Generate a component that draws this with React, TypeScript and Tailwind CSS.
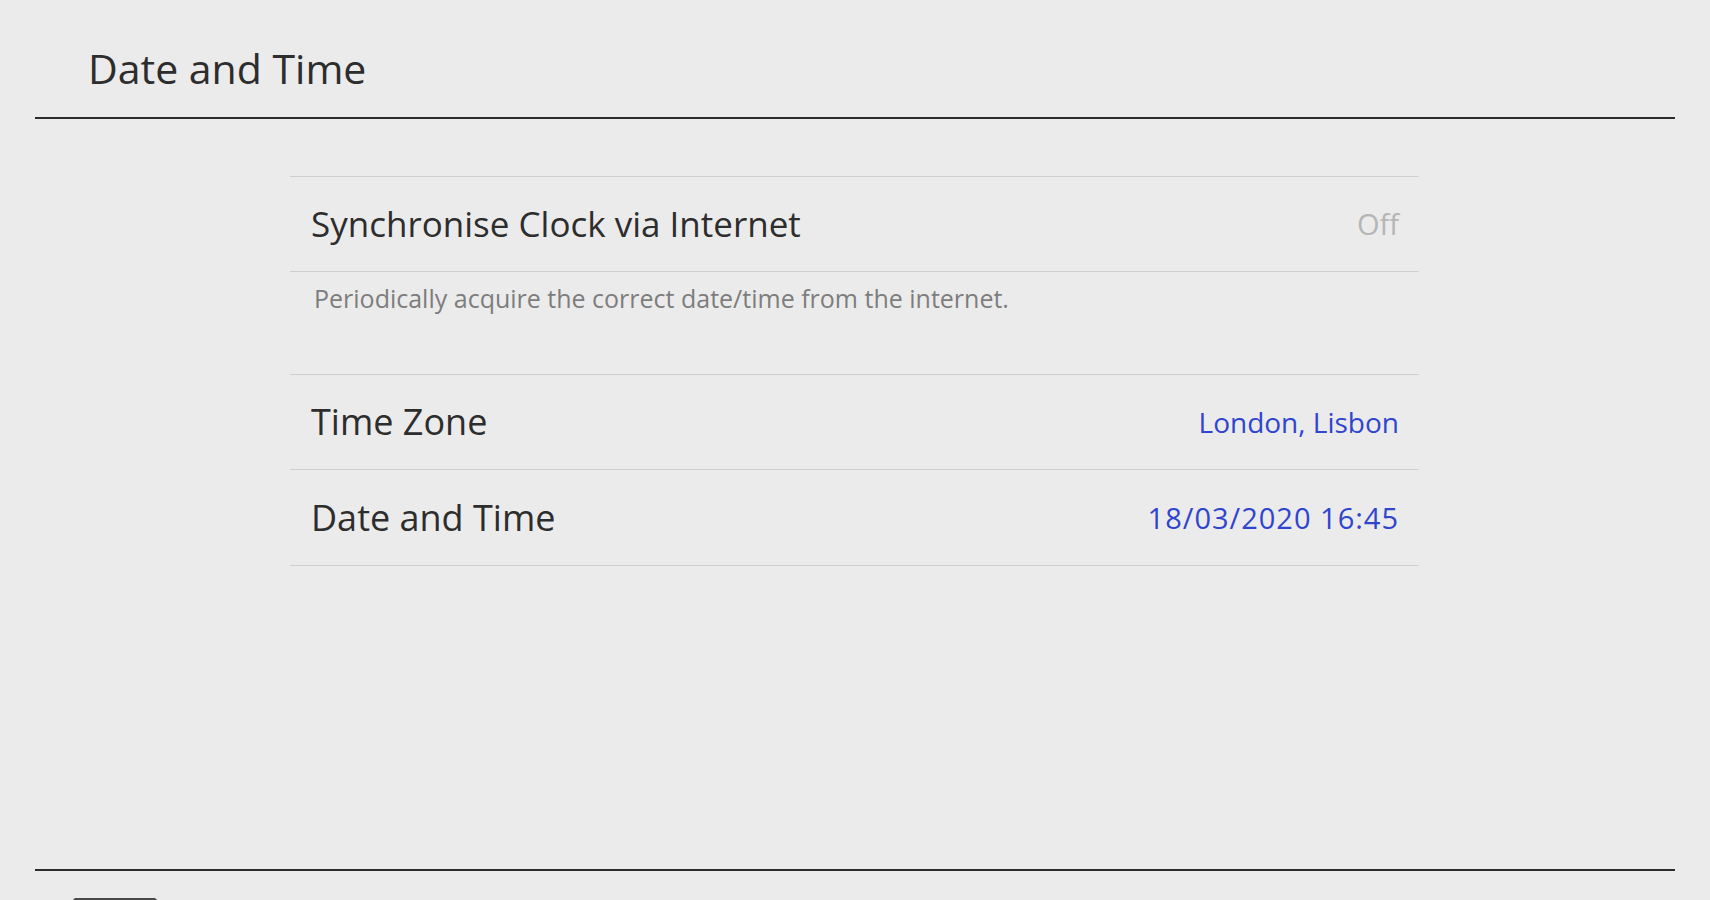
export default function App() {
  const rows = [
    { label: "Time Zone", value: "London, Lisbon", valueClass: "text-[28px]" },
    { label: "Date and Time", value: "18/03/2020 16:45", valueClass: "text-[29px] tracking-[1px]" },
  ]

  return (
    <div className="flex h-[900px] w-[1710px] flex-col overflow-hidden bg-[#ebebeb] font-['Open_Sans',sans-serif] text-[#2d2d2d]">
      {/* header */}
      <header className="mx-[35px] box-border h-[119px] border-b-2 border-[#2d2d2d] pl-[53px] pt-[44px]">
        <h1 className="text-[41px] leading-[48px]">Date and Time</h1>
      </header>

      {/* settings list */}
      <main className="flex-1 pt-[57px]">
        <div className="ml-[290px] w-[1129px]">
          <div className="box-border flex h-[96px] items-center justify-between border-y border-[#cfcfcf] pl-[21px] pr-[20px]">
            <span className="text-[35px]">Synchronise Clock via Internet</span>
            <span className="text-[29px] text-[#b5b5b5]">Off</span>
          </div>
          <div className="box-border h-[102px] pl-[24px] pt-[12px]">
            <p className="text-[25px] leading-[28px] text-[#7d7d7d]">
              Periodically acquire the correct date/time from the internet.
            </p>
          </div>
          {rows.map((r, i) => (
            <div
              key={r.label}
              className={
                i === rows.length - 1
                  ? "box-border flex h-[97px] items-center justify-between border-y border-[#cfcfcf] pl-[21px] pr-[20px]"
                  : "box-border flex h-[95px] items-center justify-between border-t border-[#cfcfcf] pl-[21px] pr-[20px]"
              }
            >
              <span className="text-[36px]">{r.label}</span>
              <span className={`${r.valueClass} text-[#3045cf]`}>{r.value}</span>
            </div>
          ))}
        </div>
      </main>

      {/* footer */}
      <footer className="mx-[35px] box-border h-[31px] border-t-2 border-[#2d2d2d] pl-[38px] pt-[27px]">
        <div className="h-[6px] w-[84px] rounded-t-[3px] border-t-2 border-[#4a4a4a]" />
      </footer>
    </div>
  )
}
